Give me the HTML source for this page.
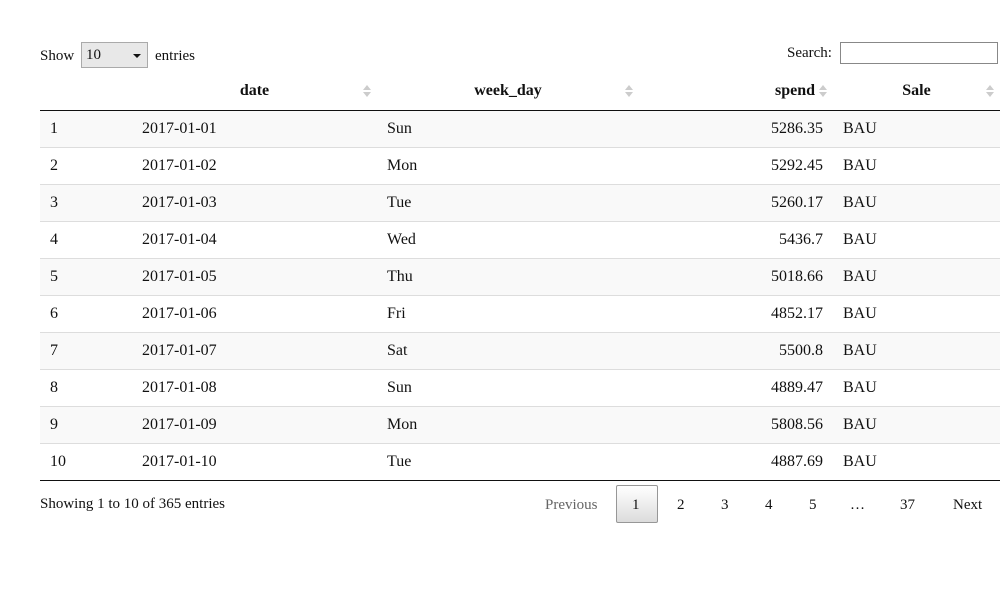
<!DOCTYPE html>
<html><head><style>
body{margin:0;width:1000px;height:597px;background:#fff;font-family:"Liberation Serif",serif;font-size:15px;color:#111;position:relative;overflow:hidden}
.a{position:absolute;white-space:nowrap}
table{position:absolute;left:40px;top:72px;width:960px;border-collapse:collapse;font-size:16px}
th{height:38px;font-weight:bold;border-bottom:1px solid #111;padding:0;position:relative}
td{height:36px;border-top:1px solid #ddd;padding:0 10px}
tr.o td{background:#f9f9f9}
tbody tr:first-child td{border-top:none}
tbody tr:last-child td{border-bottom:1px solid #111}
.s{position:absolute;right:10px;top:13px;width:0;height:0}
.s:before{content:"";position:absolute;left:-4px;top:0;border:4px solid transparent;border-bottom:5px solid #ccc;border-top:none}
.s:after{content:"";position:absolute;left:-4px;top:7px;border:4px solid transparent;border-top:5px solid #ccc;border-bottom:none}
</style></head><body>
<div class="a" style="left:40px;top:48px">Show</div>
<div class="a" style="left:81px;top:42px;width:67px;height:26px;border:1px solid #aaa;background:#e8e8e8;box-sizing:border-box;"><span style="position:absolute;left:4px;top:4px">10</span><span style="position:absolute;right:6px;top:11px;border:4px solid transparent;border-top:4px solid #111;border-bottom:none"></span></div>
<div class="a" style="left:155px;top:48px">entries</div>
<div class="a" style="left:787px;top:45px">Search:</div>
<div class="a" style="left:840px;top:42px;width:158px;height:22px;border:1px solid #888;box-sizing:border-box"></div>
<table>
<colgroup><col style="width:92px"><col style="width:245px"><col style="width:262px"><col style="width:194px"><col style="width:167px"></colgroup>
<thead><tr><th></th><th>date<span class="s"></span></th><th>week_day<span class="s"></span></th><th style="text-align:right;padding-right:18px">spend<span class="s" style="right:10px"></span></th><th>Sale<span class="s"></span></th></tr></thead>
<tbody>
<tr class="o"><td>1</td><td>2017-01-01</td><td>Sun</td><td style="text-align:right">5286.35</td><td>BAU</td></tr>
<tr><td>2</td><td>2017-01-02</td><td>Mon</td><td style="text-align:right">5292.45</td><td>BAU</td></tr>
<tr class="o"><td>3</td><td>2017-01-03</td><td>Tue</td><td style="text-align:right">5260.17</td><td>BAU</td></tr>
<tr><td>4</td><td>2017-01-04</td><td>Wed</td><td style="text-align:right">5436.7</td><td>BAU</td></tr>
<tr class="o"><td>5</td><td>2017-01-05</td><td>Thu</td><td style="text-align:right">5018.66</td><td>BAU</td></tr>
<tr><td>6</td><td>2017-01-06</td><td>Fri</td><td style="text-align:right">4852.17</td><td>BAU</td></tr>
<tr class="o"><td>7</td><td>2017-01-07</td><td>Sat</td><td style="text-align:right">5500.8</td><td>BAU</td></tr>
<tr><td>8</td><td>2017-01-08</td><td>Sun</td><td style="text-align:right">4889.47</td><td>BAU</td></tr>
<tr class="o"><td>9</td><td>2017-01-09</td><td>Mon</td><td style="text-align:right">5808.56</td><td>BAU</td></tr>
<tr><td>10</td><td>2017-01-10</td><td>Tue</td><td style="text-align:right">4887.69</td><td>BAU</td></tr>
</tbody></table>
<div class="a" style="left:40px;top:496px">Showing 1 to 10 of 365 entries</div>
<div class="a" style="left:545px;top:497px;color:#666">Previous</div>
<div class="a" style="left:616px;top:485px;width:42px;height:38px;box-sizing:border-box;border:1px solid #979797;border-radius:2px;background:linear-gradient(#fff,#dcdcdc)"></div>
<div class="a" style="left:632px;top:497px">1</div>
<div class="a" style="left:677px;top:497px">2</div>
<div class="a" style="left:721px;top:497px">3</div>
<div class="a" style="left:765px;top:497px">4</div>
<div class="a" style="left:809px;top:497px">5</div>
<div class="a" style="left:850px;top:497px">…</div>
<div class="a" style="left:900px;top:497px">37</div>
<div class="a" style="left:953px;top:497px">Next</div>
</body></html>
